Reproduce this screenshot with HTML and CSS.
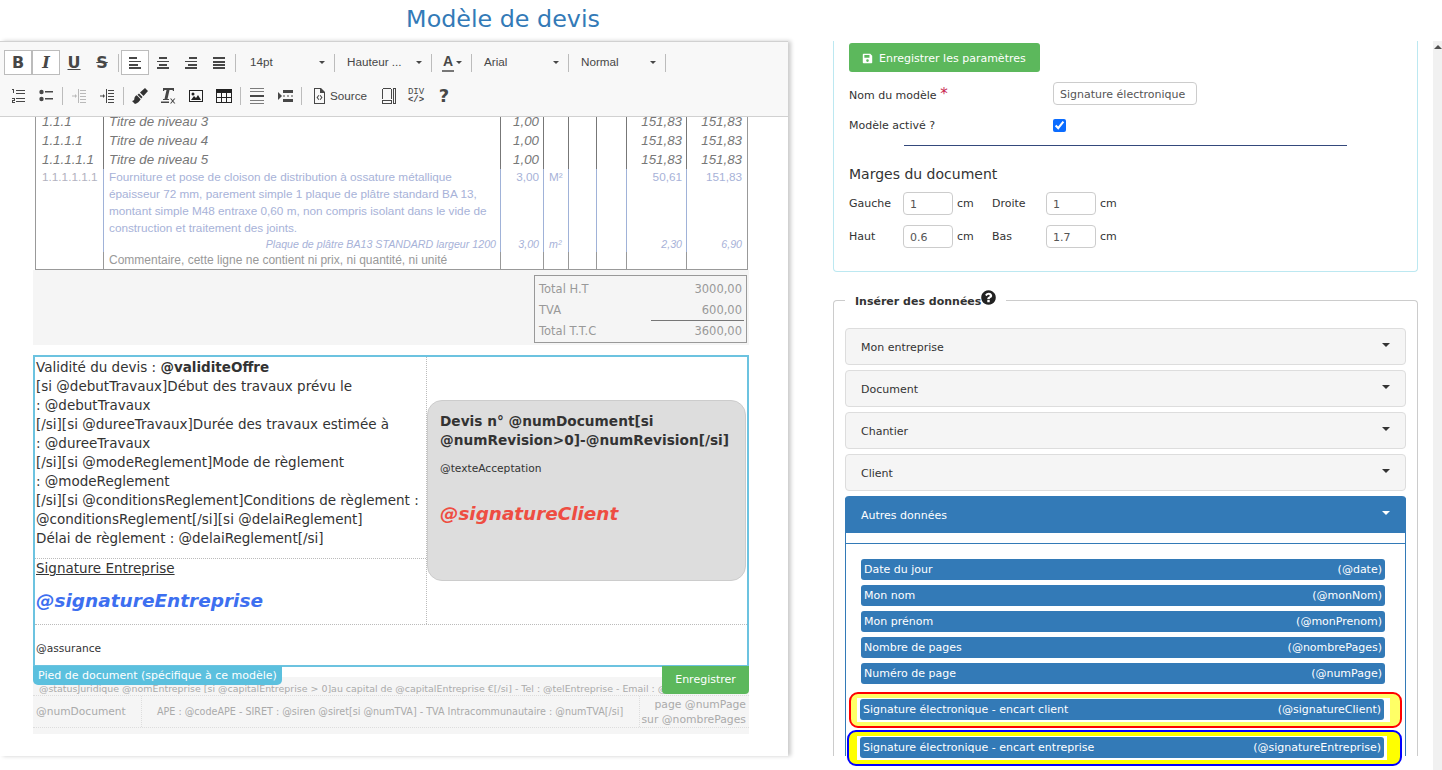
FILE: index.html
```html
<!DOCTYPE html>
<html lang="fr">

<head>
    <meta charset="UTF-8">
    <title>Modèle de devis</title>
    <link rel="stylesheet" href="styles.css">
</head>

<body>
    <h1 class="page-title">Modèle de devis</h1>

    <div class="workspace">
        <section class="editor-col">
            <div class="toolbar">
                <div class="tb-row">
                    <span class="tb-btn tb-on tb-b">B</span>
                    <span class="tb-btn tb-on tb-i">I</span>
                    <span class="tb-btn tb-u">U</span>
                    <span class="tb-btn tb-s">S</span>
                    <span class="tb-sep"></span>
                    <span class="tb-btn tb-on"><svg class="ico" viewBox="0 0 16 16"><path d="M2 2h8v2H2zM2 6h12v1H2zM2 9h9v2H2zM2 12h12v2H2z"/></svg></span>
                    <span class="tb-btn"><svg class="ico" viewBox="0 0 16 16"><path d="M4 2h8v2H4zM2 6h12v1H2zM4 9h8v2H4zM2 12h12v2H2z"/></svg></span>
                    <span class="tb-btn"><svg class="ico" viewBox="0 0 16 16"><path d="M6 2h8v2H6zM2 6h12v1H2zM5 9h9v2H5zM2 12h12v2H2z"/></svg></span>
                    <span class="tb-btn"><svg class="ico" viewBox="0 0 16 16"><path d="M2 2h12v2H2zM2 6h12v2H2zM2 9h12v2H2zM2 12h12v2H2z"/></svg></span>
                    <span class="tb-sep"></span>
                    <span class="tb-combo">14pt<i class="tb-arrow"></i></span>
                    <span class="tb-sep tb-sep-flat"></span>
                    <span class="tb-combo">Hauteur ...<i class="tb-arrow"></i></span>
                    <span class="tb-sep tb-sep-flat"></span>
                    <span class="tb-color"><span class="tb-color-a">A</span><i class="tb-arrow"></i></span>
                    <span class="tb-sep tb-sep-flat"></span>
                    <span class="tb-combo">Arial<i class="tb-arrow"></i></span>
                    <span class="tb-sep tb-sep-flat"></span>
                    <span class="tb-combo">Normal<i class="tb-arrow"></i></span>
                    <span class="tb-sep tb-sep-flat"></span>
                </div>
                <div class="tb-row">
                    <span class="tb-btn"><svg class="ico" viewBox="0 0 16 16"><path d="M2 1h2v4H3V2H2zM6 2h9v1H6zM6 5h9v1H6zM2 10h3v3H3v1h2v1H2v-3h2v-1H2zM6 10h9v1H6zM6 13h9v1H6z"/></svg></span>
                    <span class="tb-btn"><svg class="ico" viewBox="0 0 16 16"><circle cx="3.5" cy="4" r="2.2"/><circle cx="3.5" cy="11" r="2.2"/><path d="M7 3h8v1.600H7zM7 10h8v1.600H7z"/></svg></span>
                    <span class="tb-sep"></span>
                    <span class="tb-btn tb-off"><svg class="ico" viewBox="0 0 16 16"><path d="M7 1h1v14H7zM9 2h6v1H9zM9 5h6v1H9zM9 8h6v1H9zM9 11h6v1H9zM9 14h6v1H9zM1 7.500h3V6l2 2-2 2V8.500H1z"/></svg></span>
                    <span class="tb-btn"><svg class="ico" viewBox="0 0 16 16"><path d="M7 1h1v14H7zM9 2h6v1H9zM9 5h6v1H9zM9 8h6v1H9zM9 11h6v1H9zM9 14h6v1H9zM1 7.500h3V6l2 2-2 2V8.500H1z"/></svg></span>
                    <span class="tb-sep"></span>
                    <span class="tb-btn"><svg class="ico ico-brush" viewBox="0 0 16 16"><path d="M13 0l3 3-4.500 5-3.500-3.500zM7 5.500l3.500 3.500-1.200 1.500L5.500 6.700zM4.800 7.300l3.900 3.900C7.500 13.500 5.500 15.300 3 16l-3-3c1.500-.3 2.300-.9 2.300-1.800 0-1.800 1-3.300 2.500-3.900z"/></svg></span>
                    <span class="tb-btn"><svg class="ico" viewBox="0 0 16 16"><path d="M3 0h11v3h-1l-.5-1H9.500L7.500 11H9v1H3v-1h1.500l2-9H4.500L4 3H3zM1 13.500h8V15H1zM10 10.500h1.200l1.500 1.700 1.500-1.700h1.200l-2.100 2.500 2.100 2.500h-1.200l-1.500-1.700-1.500 1.700H10l2.100-2.500z"/></svg></span>
                    <span class="tb-btn"><svg class="ico ico-wide" viewBox="0 0 16 14"><path fill-rule="evenodd" d="M1 1h14v12H1zM2 2v10h12V2zM3 11l3-4 2 2 2-3 3 5zM5 3.500a1.500 1.500 0 1 1 0 3 1.500 1.500 0 0 1 0-3z"/></svg></span>
                    <span class="tb-btn"><svg class="ico ico-wide" viewBox="0 0 16 14"><path fill-rule="evenodd" d="M0 0h16v14H0zM1 4v4h4V4zM6 4v4h4V4zM11 4v4h4V4zM1 9v4h4V9zM6 9v4h4V9zM11 9v4h4V9z"/></svg></span>
                    <span class="tb-sep"></span>
                    <span class="tb-btn"><svg class="ico" viewBox="0 0 16 16"><path class="ico-soft" d="M1 0h14v1H1zM1 3h14v1H1zM1 12h14v1H1zM1 15h14v1H1z"/><path d="M1 7h14v2H1z"/></svg></span>
                    <span class="tb-btn"><svg class="ico" viewBox="0 0 16 16"><path d="M1 4l4 4-4 4zM6 2h10v3H6zM6 11h10v3H6zM6 7.500h2v1H6zM10 7.500h2v1h-2zM14 7.500h2v1h-2z"/></svg></span>
                    <span class="tb-sep"></span>
                    <span class="tb-source"><svg class="ico" viewBox="0 0 16 16"><path fill-rule="evenodd" d="M3 0h7l4 4v12H3zM4 1v14h9V5H9V1zM7.500 7l-2 2.500 2 2.500.8-.6-1.500-1.900 1.500-1.900zM9.500 7l-.8.6 1.500 1.900-1.500 1.900.8.6 2-2.500z"/></svg>Source</span>
                    <span class="tb-btn tb-blocks"><svg class="ico" viewBox="0 0 16 16"><path fill-rule="evenodd" d="M1 0h10v1H1zM1 0h1v11H1zM10 0h1v11h-1zM1 12h10v4H1zM2 13v2h8v-2zM12 0h3v16h-3zM13 1v14h1V1z"/></svg></span>
                    <span class="tb-btn tb-div"><span class="tb-div-top">DIV</span><span class="tb-div-code">&lt;/&gt;</span></span>
                    <span class="tb-btn tb-help">?</span>
                </div>
            </div>

            <div class="doc">
                <div class="lines-clip">
                    <table class="lines">
                        <colgroup>
                            <col class="c-num"><col class="c-label"><col class="c-qty"><col class="c-unit"><col class="c-a"><col class="c-b"><col class="c-price"><col class="c-total">
                        </colgroup>
                        <tr class="row-title">
                            <td>1.1.1</td><td>Titre de niveau 3</td><td class="num">1,00</td><td></td><td></td><td></td><td class="num">151,83</td><td class="num">151,83</td>
                        </tr>
                        <tr class="row-title">
                            <td>1.1.1.1</td><td>Titre de niveau 4</td><td class="num">1,00</td><td></td><td></td><td></td><td class="num">151,83</td><td class="num">151,83</td>
                        </tr>
                        <tr class="row-title">
                            <td>1.1.1.1.1</td><td>Titre de niveau 5</td><td class="num">1,00</td><td></td><td></td><td></td><td class="num">151,83</td><td class="num">151,83</td>
                        </tr>
                        <tr class="row-work">
                            <td class="num-light">1.1.1.1.1.1</td>
                            <td>Fourniture et pose de cloison de distribution à ossature métallique épaisseur 72 mm, parement simple 1 plaque de plâtre standard BA 13, montant simple M48 entraxe 0,60 m, non compris isolant dans le vide de construction et traitement des joints.</td>
                            <td class="num">3,00</td><td class="unit">M²</td><td></td><td></td><td class="num">50,61</td><td class="num">151,83</td>
                        </tr>
                        <tr class="row-supply">
                            <td></td><td class="num">Plaque de plâtre BA13 STANDARD largeur 1200</td><td class="num">3,00</td><td class="unit">m²</td><td></td><td></td><td class="num">2,30</td><td class="num">6,90</td>
                        </tr>
                        <tr class="row-comment">
                            <td></td><td>Commentaire, cette ligne ne contient ni prix, ni quantité, ni unité</td><td></td><td></td><td></td><td></td><td></td><td></td>
                        </tr>
                    </table>
                </div>

                <div class="totals-band">
                    <div class="totals">
                        <div class="total-row"><span>Total H.T</span><span>3000,00</span></div>
                        <div class="total-row"><span>TVA</span><span>600,00</span></div>
                        <div class="total-row total-final"><span>Total T.T.C</span><span>3600,00</span></div>
                    </div>
                </div>

                <div class="footer-edit">
                    <div class="edit-box">
                        <div class="edit-terms">
                            Validité du devis : <b>@validiteOffre</b><br>
                            [si @debutTravaux]Début des travaux prévu le<br>
                            : @debutTravaux<br>
                            [/si][si @dureeTravaux]Durée des travaux estimée à<br>
                            : @dureeTravaux<br>
                            [/si][si @modeReglement]Mode de règlement<br>
                            : @modeReglement<br>
                            [/si][si @conditionsReglement]Conditions de règlement :<br>
                            @conditionsReglement[/si][si @delaiReglement]<br>
                            Délai de règlement : @delaiReglement[/si]
                        </div>
                        <div class="edit-sign">
                            <u>Signature Entreprise</u>
                            <div class="sign-company">@signatureEntreprise</div>
                        </div>
                        <div class="edit-client">
                            <div class="client-box">
                                <div class="client-title">Devis n° @numDocument[si @numRevision&gt;0]-@numRevision[/si]</div>
                                <div class="client-accept">@texteAcceptation</div>
                                <div class="sign-client">@signatureClient</div>
                            </div>
                        </div>
                        <div class="edit-assurance">@assurance</div>
                    </div>
                    <span class="edit-label">Pied de document (spécifique à ce modèle)</span>
                    <span class="edit-save">Enregistrer</span>
                </div>

                <div class="page-foot">
                    <div class="foot-line">@statusJuridique @nomEntreprise [si @capitalEntreprise &gt; 0]au capital de @capitalEntreprise €[/si] - Tel : @telEntreprise - Email : @emailEntreprise</div>
                    <div class="foot-grid">
                        <div class="foot-doc">@numDocument</div>
                        <div class="foot-legal">APE : @codeAPE - SIRET : @siren @siret[si @numTVA] - TVA Intracommunautaire : @numTVA[/si]</div>
                        <div class="foot-page">page @numPage<br>sur @nombrePages</div>
                    </div>
                </div>
            </div>
        </section>

        <aside class="side">
            <div class="settings">
                <button class="save-btn"><svg class="save-ico" viewBox="0 0 14 14"><path fill-rule="evenodd" d="M2 1h8.500L13 3.500V12a1 1 0 0 1-1 1H2a1 1 0 0 1-1-1V2a1 1 0 0 1 1-1zM3 2.500V6h6.500V2.500zM7 8a1.700 1.700 0 1 0 0 3.400A1.700 1.700 0 0 0 7 8z"/></svg>Enregistrer les paramètres</button>
                <div class="field-row field-name">
                    <label class="field-label">Nom du modèle <span class="req">*</span></label>
                    <input class="text-input name-input" type="text" value="Signature électronique">
                </div>
                <div class="field-row field-active">
                    <label class="field-label">Modèle activé ?</label>
                    <input class="check" type="checkbox" checked>
                </div>
                <hr class="rule">
                <h4 class="margins-title">Marges du document</h4>
                <div class="margins">
                    <span>Gauche</span><span class="margin-value"><input class="text-input margin-input" type="text" value="1">cm</span>
                    <span>Droite</span><span class="margin-value"><input class="text-input margin-input" type="text" value="1">cm</span>
                    <span>Haut</span><span class="margin-value"><input class="text-input margin-input" type="text" value="0.6">cm</span>
                    <span>Bas</span><span class="margin-value"><input class="text-input margin-input" type="text" value="1.7">cm</span>
                </div>
            </div>

            <fieldset class="insert">
                <legend class="insert-legend">Insérer des données<svg class="help-ico" viewBox="0 0 1536 1792"><path d="M896 1376v-192q0-14-9-23t-23-9h-192q-14 0-23 9t-9 23v192q0 14 9 23t23 9h192q14 0 23-9t9-23zm256-672q0-88-55.500-163t-138.500-116-170-41q-243 0-371 213-15 24 8 42l132 100q7 6 19 6 16 0 25-12 53-68 86-92 34-24 86-24 48 0 85.500 26t37.500 59q0 38-20 61t-68 45q-63 28-115.500 86.500t-52.500 125.500v36q0 14 9 23t23 9h192q14 0 23-9t9-23q0-19 21.500-49.500t54.500-49.500q32-18 49-28.500t46-35 44.500-48 28-60.500 12.500-81zm384 192q0 209-103 385.500t-279.500 279.500-385.500 103-385.500-103-279.500-279.500-103-385.500 103-385.500 279.500-279.500 385.500-103 385.500 103 279.500 279.500 103 385.500z"/></svg></legend>

                <div class="acc-head">Mon entreprise<i class="acc-caret"></i></div>
                <div class="acc-head">Document<i class="acc-caret"></i></div>
                <div class="acc-head">Chantier<i class="acc-caret"></i></div>
                <div class="acc-head">Client<i class="acc-caret"></i></div>

                <div class="acc-open">
                    <div class="acc-head acc-head-on">Autres données<i class="acc-caret"></i></div>
                    <div class="acc-gap"></div>
                    <div class="acc-body">
                        <div class="data-item"><span>Date du jour</span><span>(@date)</span></div>
                        <div class="data-item"><span>Mon nom</span><span>(@monNom)</span></div>
                        <div class="data-item"><span>Mon prénom</span><span>(@monPrenom)</span></div>
                        <div class="data-item"><span>Nombre de pages</span><span>(@nombrePages)</span></div>
                        <div class="data-item"><span>Numéro de page</span><span>(@numPage)</span></div>
                        <div class="mark mark-red">
                            <div class="mark-inner">
                                <div class="data-item"><span>Signature électronique - encart client</span><span>(@signatureClient)</span></div>
                            </div>
                        </div>
                        <div class="mark mark-blue">
                            <div class="mark-inner">
                                <div class="data-item"><span>Signature électronique - encart entreprise</span><span>(@signatureEntreprise)</span></div>
                            </div>
                        </div>
                    </div>
                </div>
            </fieldset>
        </aside>

        <div class="scrollbar"><i class="scroll-up"></i></div>
    </div>
</body>

</html>
```

FILE: styles.css
```css
html,
body {
    height: 770px;
    overflow: hidden;
}

body {
    margin: 0;
    background: #fff;
    color: #333;
    font-family: "DejaVu Sans", sans-serif;
    font-size: 11px;
}

.page-title {
    width: 1006px;
    height: 41px;
    margin: 0;
    color: #337ab7;
    font-size: 23.800px;
    font-weight: 400;
    line-height: 38px;
    text-align: center;
}

.workspace {
    display: flex;
    height: 729px;
    align-items: flex-start;
}

/* left column */
.editor-col {
    flex: none;
    width: 788px;
    height: 715px;
    box-shadow: 3px 0 4px #ccc;
}

.toolbar {
    box-sizing: border-box;
    height: 76px;
    padding: 8px 0 0 4px;
    background: #f8f8f8;
    border-top: 1px solid #d1d1d1;
    border-bottom: 1px solid #d1d1d1;
    color: #474747;
    font-family: "Liberation Sans", sans-serif;
    font-size: 11.700px;
}

.tb-row {
    display: flex;
    align-items: center;
    height: 25px;
    margin-bottom: 8px;
}

.tb-btn {
    box-sizing: border-box;
    display: flex;
    flex: none;
    align-items: center;
    justify-content: center;
    width: 28px;
    height: 25px;
    font-size: 16px;
    font-weight: 700;
}

.tb-on {
    border: 1px solid #bcbcbc;
    background: #fff;
}

.tb-b {
    font-family: "DejaVu Sans", sans-serif;
}

.tb-i {
    font-family: "DejaVu Serif", serif;
    font-style: italic;
}

.tb-u {
    font-family: "DejaVu Sans", sans-serif;
    text-decoration: underline;
}

.tb-s {
    font-family: "DejaVu Sans", sans-serif;
    text-decoration: line-through;
}

.tb-off {
    opacity: .35;
}

.tb-blocks {
    margin-left: 2px;
}

.tb-div {
    flex-direction: column;
    margin-left: -1px;
    font-weight: 400;
    line-height: 8px;
}

.tb-div-top {
    font-family: "Liberation Mono", monospace;
    font-size: 9px;
}

.tb-div-code {
    font-family: "Liberation Mono", monospace;
    font-size: 9px;
    font-weight: 700;
}

.tb-help {
    font-family: "DejaVu Sans", sans-serif;
    font-size: 18px;
}

.ico {
    width: 16px;
    height: 16px;
    fill: #474747;
}

.ico-wide {
    height: 14px;
    fill: #222;
}

.ico-brush {
    fill: #333;
}

.ico-soft {
    opacity: .7;
}

.tb-sep {
    flex: none;
    width: 1px;
    height: 18px;
    margin: 0 2px;
    background: #bcbcbc;
}

.tb-sep-flat {
    margin: 0;
}

.tb-combo {
    box-sizing: border-box;
    position: relative;
    flex: none;
    width: 96px;
    height: 25px;
    padding-left: 12px;
    line-height: 24px;
}

.tb-arrow {
    position: absolute;
    top: 11px;
    right: 9px;
    border-top: 3px solid #474747;
    border-right: 3px solid transparent;
    border-left: 3px solid transparent;
}

.tb-color {
    box-sizing: border-box;
    position: relative;
    flex: none;
    width: 39px;
    height: 25px;
    padding-left: 10px;
    font-size: 14px;
    font-weight: 700;
    line-height: 23px;
}

.tb-color-a {
    display: inline-block;
    height: 20px;
    padding: 0 1px;
    border-bottom: 2px solid #777;
}

.tb-source {
    display: flex;
    flex: none;
    align-items: center;
    gap: 3px;
    width: 68px;
    margin-left: 1px;
    padding-left: 6px;
    box-sizing: border-box;
}

/* document preview */
.doc {
    width: 716px;
    margin-left: 33px;
}

.lines-clip {
    height: 153px;
    overflow: hidden;
    padding-left: 2px;
}

.lines {
    width: 712px;
    margin-top: -5px;
    border-collapse: collapse;
    table-layout: fixed;
    font-family: "Liberation Sans", sans-serif;
    border-bottom: 1px solid #999;
    border-right: 1px solid #999;
    border-left: 1px solid #999;
}

.c-num { width: 68px; }
.c-label { width: 397px; }
.c-qty { width: 43px; }
.c-unit { width: 25px; }
.c-a { width: 28px; }
.c-b { width: 30px; }
.c-price { width: 60px; }
.c-total { width: 61px; }

.lines td {
    padding: 0 4px 0 6px;
    vertical-align: top;
}

.lines td + td {
    padding-left: 5px;
    border-left: 1px solid #777;
}

.lines td:last-child {
    padding-right: 5px;
}

.lines .num {
    text-align: right;
}

.lines .unit {
    padding: 0 0 0 5px;
}

.row-title td {
    height: 19px;
    color: #777;
    font-size: 13.330px;
    font-style: italic;
    line-height: 19px;
}

.row-work td {
    color: #a7b2d8;
    font-size: 11.750px;
    line-height: 17px;
    height: 67px;
}

/* text of this row sits a pixel above the row top */
.row-work td::before {
    content: "";
    display: block;
    margin-top: -1px;
}

.lines .row-work td + td,
.lines .row-supply td + td {
    border-left-color: #a0b2d8;
}

.lines .row-comment td + td {
    border-left-color: #999;
}

.lines .num-light {
    padding-right: 0;
    color: #b2b2c0;
}

.row-supply td {
    height: 16px;
    color: #a7b2d8;
    font-size: 10.670px;
    font-style: italic;
    line-height: 16px;
}

.row-comment td {
    height: 17px;
    color: #999;
    font-size: 12px;
    line-height: 16px;
}

.totals-band {
    height: 70px;
    padding: 5px 0 0 501px;
    background: #f5f5f5;
}

.totals {
    box-sizing: border-box;
    width: 213px;
    height: 68px;
    padding: 3px 4px;
    border: 1px solid #999;
    color: #999;
    font-size: 11.500px;
}

.total-row {
    display: flex;
    justify-content: space-between;
    height: 21px;
    line-height: 21px;
}

.total-final {
    position: relative;
}

.total-final::before {
    content: "";
    position: absolute;
    top: -1px;
    right: -2px;
    width: 93px;
    border-top: 1px solid #777;
}

.footer-edit {
    position: relative;
    margin-top: 10px;
}

.edit-box {
    box-sizing: border-box;
    display: grid;
    grid-template-columns: 391px 1fr;
    grid-template-rows: 202px 65px 1fr;
    height: 312px;
    border: 2px solid #6cc3e0;
    color: #333;
    font-size: 13.500px;
    line-height: 19px;
}

.edit-terms {
    padding: 1px 0 0 1px;
    border-bottom: 1px dotted #bbb;
    white-space: nowrap;
}

.edit-sign {
    padding-left: 1px;
}

.edit-client {
    display: flex;
    grid-column: 2;
    grid-row: 1 / 3;
    align-items: center;
    padding-right: 1px;
    border-left: 1px dotted #bbb;
}

.edit-assurance {
    grid-column: 1 / 3;
    padding: 14px 0 0 1px;
    border-top: 1px dotted #bbb;
    font-size: 10.670px;
}

.sign-company {
    margin-top: 11px;
    color: #3d6ff0;
    font-size: 18.500px;
    font-style: italic;
    font-weight: 700;
    line-height: 24px;
}

.client-box {
    box-sizing: border-box;
    width: 319px;
    height: 181px;
    padding: 11px 12px;
    background: #ddd;
    border: 1px solid #ccc;
    border-radius: 15px;
}

.client-title {
    font-size: 13.700px;
    font-weight: 700;
}

.client-accept {
    margin-top: 11px;
    font-size: 10.670px;
    line-height: 16px;
}

.sign-client {
    margin-top: 25px;
    color: #ee4d42;
    font-size: 18.400px;
    font-style: italic;
    font-weight: 700;
    line-height: 24px;
}

.edit-label {
    position: absolute;
    top: 311px;
    left: 0;
    padding: 0 5px;
    background: #5bc0de;
    border-radius: 0 0 5px 5px;
    color: #fff;
    font-size: 11px;
    line-height: 19px;
}

.edit-save {
    position: absolute;
    top: 311px;
    right: 0;
    width: 87px;
    background: #5cb85c;
    border-radius: 0 0 4px 4px;
    color: #fff;
    font-size: 11px;
    line-height: 28px;
    text-align: center;
}

.page-foot {
    box-sizing: border-box;
    height: 57px;
    margin-top: 10px;
    padding-top: 1px;
    background: #f5f5f5;
    color: #aaa;
}

.foot-line {
    height: 17px;
    overflow: hidden;
    padding-left: 6px;
    border-bottom: 1px dotted #ddd;
    font-size: 9.450px;
    line-height: 21px;
    white-space: nowrap;
}

.foot-grid {
    display: grid;
    grid-template-columns: 108px 499px 1fr;
    align-items: center;
    height: 31px;
    border-bottom: 1px dotted #ddd;
}

.foot-doc {
    padding-left: 3px;
    font-size: 10.670px;
}

.foot-legal {
    height: 100%;
    padding-left: 15px;
    border-right: 1px dotted #ddd;
    border-left: 1px dotted #ddd;
    font-size: 9.600px;
    line-height: 31px;
    white-space: nowrap;
}

.foot-page {
    padding-right: 3px;
    font-size: 10.800px;
    line-height: 15px;
    text-align: right;
    white-space: nowrap;
}

/* right column */
.side {
    flex: none;
    width: 585px;
    margin-left: 45px;
}

.settings {
    box-sizing: border-box;
    height: 231px;
    padding: 2px 15px 0;
    border: 1px solid #bce8f1;
    border-top: 0;
    border-radius: 0 0 4px 4px;
}

.save-btn {
    display: flex;
    align-items: center;
    gap: 6px;
    height: 29px;
    padding: 1px 14px 0 13px;
    background: #5cb85c;
    border: 0;
    border-radius: 3px;
    color: #fff;
    font-family: "DejaVu Sans", sans-serif;
    font-size: 11px;
}

.save-ico {
    width: 11px;
    height: 11px;
    fill: #fff;
}

.field-row {
    display: flex;
    align-items: center;
}

.field-name {
    margin-top: 10px;
}

.field-active {
    margin-top: 14px;
}

.field-label {
    width: 204px;
}

.req {
    color: #c7254e;
    font-size: 15px;
}

.text-input {
    box-sizing: border-box;
    height: 23px;
    padding: 1px 6px 0;
    background: #fff;
    border: 1px solid #ccc;
    border-radius: 4px;
    color: #555;
    font-family: "DejaVu Sans", sans-serif;
    font-size: 11px;
}

.name-input {
    width: 144px;
}

.check {
    width: 13px;
    height: 13px;
    margin: 0;
    accent-color: #0b6cff;
}

.rule {
    width: 443px;
    margin: 13px 0 0 55px;
    border: 0;
    border-top: 1px solid #34497c;
}

.margins-title {
    margin: 19px 0 0;
    font-size: 14px;
    font-weight: 400;
    line-height: 18px;
}

.margins {
    display: grid;
    grid-template-columns: 54px 89px 54px 1fr;
    grid-auto-rows: 23px;
    align-items: center;
    row-gap: 10px;
    margin-top: 9px;
}

.margin-value {
    display: flex;
    align-items: center;
    gap: 4px;
}

.margin-input {
    width: 50px;
}

.insert {
    box-sizing: border-box;
    height: 467px;
    min-width: 0;
    margin: 17px 0 0;
    padding: 16px 11px 0;
    border: 1px solid #ccc;
    border-bottom: 0;
    border-radius: 4px 4px 0 0;
}

.insert-legend {
    margin-left: 0;
    padding: 0 10px 4px;
    color: #333;
    font-size: 11px;
    font-weight: 700;
}

.help-ico {
    width: 15px;
    height: 17px;
    vertical-align: -1px;
    fill: #222;
}

.acc-head {
    box-sizing: border-box;
    position: relative;
    height: 37px;
    margin-bottom: 5px;
    padding-left: 15px;
    background: #f5f5f5;
    border: 1px solid #ddd;
    border-radius: 4px;
    line-height: 37px;
}

.acc-caret {
    position: absolute;
    top: 14px;
    right: 15px;
    border-top: 4px solid #333;
    border-right: 4px solid transparent;
    border-left: 4px solid transparent;
}

.acc-open {
    box-sizing: border-box;
    height: 260px;
    border-right: 1px solid #337ab7;
    border-left: 1px solid #337ab7;
    border-radius: 4px 4px 0 0;
}

.acc-head-on {
    margin: 0 -1px;
    background: #337ab7;
    border-color: #337ab7;
    border-radius: 4px 4px 0 0;
    color: #fff;
}

.acc-head-on .acc-caret {
    border-top-color: #fff;
}

.acc-gap {
    height: 10px;
    border-bottom: 1px solid #337ab7;
}

.acc-body {
    padding: 15px 20px 0 15px;
}

.data-item {
    box-sizing: border-box;
    display: flex;
    justify-content: space-between;
    height: 21px;
    margin-bottom: 5px;
    padding: 0 3px;
    background: #337ab7;
    border-radius: 3px;
    color: #fff;
    line-height: 21px;
}

.mark {
    box-sizing: border-box;
    height: 36px;
    margin-bottom: 2px;
    padding-top: 4px;
    border: 2px solid;
    border-radius: 9px;
}

.mark-red {
    margin: 8px -17px 2px -12px;
    padding-left: 6px;
    background: #ffff66;
    border-color: #f00;
}

.mark-blue {
    margin: 0 -17px 0 -14px;
    padding-left: 8px;
    background: #ff0;
    border-color: #00f;
}

.mark-inner {
    box-sizing: border-box;
    height: 24px;
    padding: 1px 3px;
    background: #fff;
}

.mark .data-item {
    margin: 0;
}

.mark-red .mark-inner {
    width: 533px;
    padding-right: 6px;
}

.mark-blue .mark-inner {
    width: 530px;
}

.scrollbar {
    position: relative;
    flex: none;
    width: 9px;
    height: 729px;
    margin-left: 15px;
    background: #f1f1f1;
}

.scroll-up {
    position: absolute;
    top: 4px;
    left: 1px;
    border-right: 4px solid transparent;
    border-bottom: 4px solid #505050;
    border-left: 4px solid transparent;
}
```
